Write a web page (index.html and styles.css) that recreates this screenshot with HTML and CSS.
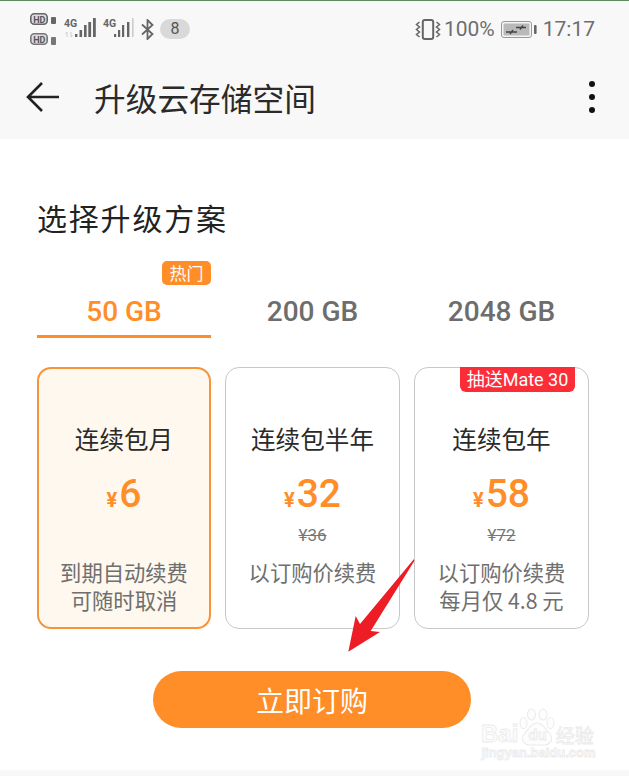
FILE: index.html
```html
<!DOCTYPE html>
<html lang="zh-CN">
<head>
    <meta charset="UTF-8">
    <meta name="viewport" content="width=device-width, initial-scale=1.0">
    <title>升级云存储空间</title>
    <link rel="stylesheet" href="styles.css">
</head>
<body>
    <div class="page">
        <!-- status bar -->
        <div class="status_bar">
            <div class="status_left">
                <svg width="28" height="36" viewBox="0 0 28 36">
                    <rect x="0.8" y="2.8" width="16.4" height="10.4" rx="3.5" fill="#ddd" stroke="#666" stroke-width="1.6"/>
                    <text x="3.2" y="11.5" class="hd_text">HD</text>
                    <rect x="21" y="6" width="5" height="7" rx="1" fill="#666"/>
                    <rect x="0.8" y="22.8" width="16.4" height="10.4" rx="3.5" fill="#ddd" stroke="#777" stroke-width="1.6"/>
                    <text x="3.2" y="31.5" class="hd_text">HD</text>
                    <rect x="21" y="26" width="5" height="8" rx="1" fill="#777"/>
                </svg>
                <svg width="33" height="36" viewBox="0 0 33 36">
                    <text x="0" y="16" class="net_text">4G</text>
                    <path d="M3 21 V26 M1.5 22.5 L3 21 M7 21 V26 M7 26 L8.5 24.5" fill="none" stroke="#ccc" stroke-width="1"/>
                    <rect x="11" y="23" width="2.4" height="3" fill="#666"/>
                    <rect x="15.5" y="19" width="2.6" height="7" fill="#666"/>
                    <rect x="20" y="14" width="2.6" height="12" fill="#666"/>
                    <rect x="24.3" y="11" width="2.8" height="15" fill="#666"/>
                    <rect x="29" y="7" width="2.8" height="19" fill="#666"/>
                </svg>
                <svg width="32" height="36" viewBox="0 0 32 36">
                    <text x="0" y="16" class="net_text">4G</text>
                    <rect x="11" y="23" width="2.2" height="3" fill="#666"/>
                    <rect x="15" y="19" width="2.2" height="7" fill="#666"/>
                    <rect x="19" y="14" width="2.2" height="12" fill="#666"/>
                    <rect x="24" y="11" width="2.4" height="15" fill="#666"/>
                    <rect x="29" y="7" width="1.6" height="19" fill="#ccc"/>
                </svg>
                <svg width="13" height="21" viewBox="0 0 13 21">
                    <path d="M1 5.5 L11.5 15 L6.5 20 L6.5 1 L11.5 6 L1 15.5" fill="none" stroke="#666" stroke-width="1.8"/>
                </svg>
                <span class="notice_count">8</span>
            </div>
            <div class="status_right">
                <svg width="26" height="21" viewBox="0 0 26 21">
                    <rect x="7.8" y="1" width="10.4" height="19" rx="2" fill="none" stroke="#666" stroke-width="2"/>
                    <path d="M4.5 3 L1.5 5.5 L4.5 8 L1.5 10.5 L4.5 13 L1.5 15.5 L4.5 18" fill="none" stroke="#666" stroke-width="1.5"/>
                    <path d="M21.5 3 L24.5 5.5 L21.5 8 L24.5 10.5 L21.5 13 L24.5 15.5 L21.5 18" fill="none" stroke="#666" stroke-width="1.5"/>
                </svg>
                <span class="percent">100%</span>
                <svg class="battery" width="36" height="17" viewBox="0 0 36 17">
                    <rect x="0.5" y="0.5" width="30" height="16" rx="2.5" fill="#f4f4f4" stroke="#999"/>
                    <rect x="2.5" y="2.5" width="26" height="12" rx="1" fill="#b9b9b9"/>
                    <rect x="33" y="4" width="2.6" height="9" rx="1" fill="#666"/>
                    <path d="M5 11 H16 M9 13 L12 9 M15 6.5 H25 M19 8.5 L22 4.5" fill="none" stroke="#444" stroke-width="1.4"/>
                </svg>
                <span class="clock">17:17</span>
            </div>
        </div>

        <!-- tool bar -->
        <div class="tool_bar">
            <svg class="back_icon" width="34" height="32" viewBox="0 0 34 32">
                <path d="M33 16 H3 M16 2 L2 16 L16 30" fill="none" stroke="#222" stroke-width="2.6"/>
            </svg>
            <h1>升级云存储空间</h1>
            <div class="more_icon"><i></i><i></i><i></i></div>
        </div>

        <div class="content">
            <h2>选择升级方案</h2>

            <div class="tabs">
                <div class="tab tab_active">50 GB<span class="hot_badge">热门</span></div>
                <div class="tab">200 GB</div>
                <div class="tab">2048 GB</div>
            </div>

            <div class="plans">
                <div class="plan plan_active">
                    <div class="plan_name">连续包月</div>
                    <div class="plan_price"><small>¥</small>6</div>
                    <div class="plan_old"></div>
                    <div class="plan_note">到期自动续费<br>可随时取消</div>
                </div>
                <div class="plan">
                    <div class="plan_name">连续包半年</div>
                    <div class="plan_price"><small>¥</small>32</div>
                    <div class="plan_old">¥36</div>
                    <div class="plan_note">以订购价续费</div>
                </div>
                <div class="plan">
                    <span class="gift_tag">抽送Mate 30</span>
                    <div class="plan_name">连续包年</div>
                    <div class="plan_price"><small>¥</small>58</div>
                    <div class="plan_old">¥72</div>
                    <div class="plan_note">以订购价续费<br>每月仅 4.8 元</div>
                </div>
            </div>

            <button class="buy_btn">立即订购</button>
        </div>

        <div class="bottom_strip"></div>

        <!-- red arrow drawn over the screenshot -->
        <svg class="red_arrow" width="70" height="96" viewBox="0 0 70 96">
            <path d="M67 1 L67.3 3 L23.7 73 L33 74 L1.3 93.7 L8.7 58 L13 66 Z" fill="#ee1c25"/>
        </svg>

        <!-- watermark -->
        <div class="watermark">
            <svg class="paw" width="36" height="38" viewBox="0 0 36 38">
                <g fill="#fdfdfd" stroke="#ececec" stroke-width="1.1">
                    <ellipse cx="4.5" cy="15" rx="3.5" ry="5.5"/>
                    <ellipse cx="12.5" cy="6.5" rx="4" ry="5.5"/>
                    <ellipse cx="24" cy="6.5" rx="4" ry="5.5"/>
                    <ellipse cx="31.5" cy="15" rx="3.5" ry="5.5"/>
                    <path d="M18 15 C12 15 10 21 5 26 C1 31 5 37 11 37 H25 C31 37 35 31 31 26 C26 21 24 15 18 15 Z"/>
                </g>
            </svg>
            <div class="wm_line"><span class="wm_bai">Bai</span><span class="wm_du">du</span><span class="wm_cn">经验</span></div>
            <div class="wm_url">jingyan.baidu.com</div>
        </div>
    </div>
</body>
</html>
```

FILE: styles.css
```css
* {
    margin: 0;
    padding: 0;
    box-sizing: border-box;
}

body {
    background-color: white;
    font-family: "Noto Sans CJK SC", Roboto, sans-serif;
}

.page {
    position: relative;
    width: 629px;
    height: 776px;
    overflow: hidden;
    display: flex;
    flex-direction: column;
}

/* status bar */
.status_bar {
    height: 54px;
    flex: none;
    display: flex;
    align-items: center;
    justify-content: space-between;
    padding: 3px 34px 0 30px;
    background-color: #f8f8f8;
    border-top: 1px solid #5f8a5f;
}

.status_left,
.status_right {
    display: flex;
    align-items: center;
}

.status_left {
    gap: 6px;
}

.hd_text {
    font-family: Roboto, sans-serif;
    font-size: 9px;
    font-weight: 700;
    fill: #555;
}

.net_text {
    font-family: Roboto, sans-serif;
    font-size: 10.5px;
    font-weight: 700;
    fill: #666;
}

.notice_count {
    width: 30px;
    height: 20px;
    border-radius: 10px;
    background-color: #d9d9d9;
    color: #555;
    font-family: Roboto, sans-serif;
    font-size: 16px;
    line-height: 20px;
    text-align: center;
}

.status_right {
    gap: 3px;
    color: #6e6e6e;
    font-family: Roboto, sans-serif;
    font-size: 21px;
}

.battery {
    margin: 0 3px;
}

/* tool bar */
.tool_bar {
    height: 85px;
    flex: none;
    display: flex;
    align-items: center;
    padding: 0 34px 0 26px;
    background-color: #f8f8f8;
}

.tool_bar h1 {
    flex: 1;
    margin-left: 34px;
    font-size: 31.7px;
    font-weight: 400;
    color: #2a2a2a;
}

.more_icon {
    display: flex;
    flex-direction: column;
    gap: 7px;
}

.more_icon i {
    width: 6px;
    height: 6px;
    border-radius: 50%;
    background-color: #111;
}

/* content */
.content {
    flex: 1;
    padding: 60px 40px 0 37px;
    background-color: white;
}

.content h2 {
    height: 36px;
    font-size: 30px;
    line-height: 36px;
    font-weight: 400;
    letter-spacing: 1.8px;
    color: #222;
}

.tabs,
.plans {
    display: grid;
    grid-template-columns: 174px 175px 175px;
    gap: 14px;
}

.tabs {
    margin-top: 65px;
}

.tab {
    position: relative;
    height: 38px;
    text-align: center;
    font-family: Roboto, sans-serif;
    font-size: 28px;
    font-weight: 500;
    line-height: 23px;
    color: #6d6d6d;
}

.tab_active {
    color: #ff8d28;
    border-bottom: 3px solid #ff8d28;
}

.hot_badge {
    position: absolute;
    top: -39px;
    right: 0;
    width: 49px;
    height: 24px;
    border-radius: 5px;
    background-color: #ff8d28;
    color: white;
    font-family: "Noto Sans CJK SC", sans-serif;
    font-size: 17px;
    font-weight: 400;
    line-height: 24px;
}

.plans {
    margin-top: 29px;
}

.plan {
    position: relative;
    height: 262px;
    padding-top: 52px;
    border: 1px solid #c8c8c8;
    border-radius: 14px;
    text-align: center;
}

.plan_active {
    border: 2px solid #f79438;
    padding-top: 51px;
    background-color: #fef8ee;
}

.plan_name {
    height: 36px;
    font-size: 24.6px;
    line-height: 36px;
    color: #2a2a2a;
}

.plan_price {
    height: 52px;
    margin-top: 12px;
    font-family: Roboto, sans-serif;
    font-size: 39px;
    font-weight: 500;
    line-height: 52px;
    color: #ff8d28;
}

.plan_price small {
    margin-right: 2px;
    font-size: 20px;
    font-weight: 700;
}

.plan_old {
    height: 24px;
    margin-top: 3px;
    font-family: Roboto, sans-serif;
    font-size: 17px;
    line-height: 24px;
    color: #777;
    text-decoration: line-through;
}

.plan_note {
    margin-top: 11px;
    font-size: 21.3px;
    line-height: 28px;
    color: #6f6f6f;
}

.gift_tag {
    position: absolute;
    top: -1px;
    right: 13px;
    width: 115px;
    height: 25px;
    border-radius: 0 0 6px 6px;
    background-color: #fb2d37;
    color: white;
    font-family: Roboto, "Noto Sans CJK SC", sans-serif;
    font-size: 18px;
    line-height: 25px;
}

.buy_btn {
    display: block;
    width: 318px;
    height: 57px;
    margin: 42px 0 0 116px;
    border: none;
    border-radius: 29px;
    background-color: #ff8d28;
    color: white;
    font-family: "Noto Sans CJK SC", sans-serif;
    font-size: 28px;
}

.bottom_strip {
    height: 6px;
    flex: none;
    background-color: #f8f8f8;
}

/* overlays */
.red_arrow {
    position: absolute;
    left: 347px;
    top: 558px;
}

.watermark {
    position: absolute;
    left: 481px;
    top: 707px;
    width: 115px;
    color: #fcfcfc;
    -webkit-text-stroke: 0.8px #ebebeb;
    text-align: center;
}

.paw {
    position: absolute;
    left: 38px;
    top: 1px;
}

.wm_line {
    position: relative;
    display: flex;
    align-items: center;
    height: 22px;
    margin-top: 16px;
    font-family: "Liberation Sans", sans-serif;
}

.wm_bai {
    font-size: 24px;
    font-weight: 700;
}

.wm_du {
    margin: 0 9px 0 10px;
    font-size: 15px;
    font-weight: 700;
}

.wm_cn {
    font-family: "Noto Sans CJK SC", sans-serif;
    font-size: 19px;
}

.wm_url {
    font-family: "Liberation Sans", sans-serif;
    font-size: 13px;
    font-weight: 700;
    line-height: 16px;
    white-space: nowrap;
}
```
